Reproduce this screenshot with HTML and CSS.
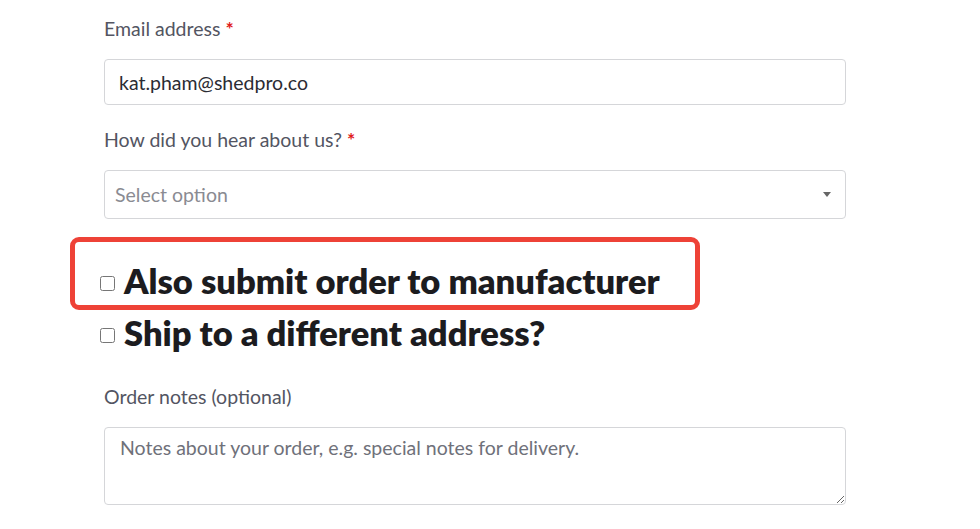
FILE: index.html
```html
<!DOCTYPE html>
<html>
<head>
<meta charset="utf-8">
<link rel="stylesheet" href="styles.css">
</head>
<body>
<form class="form">
  <div class="field">
    <label class="label">Email address <span class="req">*</span></label>
    <input class="input" type="text" value="kat.pham@shedpro.co">
  </div>
  <div class="field">
    <label class="label">How did you hear about us? <span class="req">*</span></label>
    <div class="select">
      <span class="placeholder">Select option</span>
      <span class="caret"></span>
    </div>
  </div>
  <div class="checks">
    <div class="highlight">
      <label class="check"><input type="checkbox" class="cb"><span>Also submit order to manufacturer</span></label>
    </div>
    <label class="check second"><input type="checkbox" class="cb"><span>Ship to a different address?</span></label>
  </div>
  <div class="field notes">
    <label class="label">Order notes (optional)</label>
    <textarea class="textarea" placeholder="Notes about your order, e.g. special notes for delivery."></textarea>
  </div>
</form>
</body>
</html>
```
FILE: styles.css
```css
html, body {
  margin: 0;
  padding: 0;
  background: #ffffff;
}
body {
  font-family: Lato, "Open Sans", sans-serif;
  color: #4d4f5c;
}
.form {
  width: 742px;
  margin-left: 104px;
  padding-top: 18px;
}
.field {
  display: flex;
  flex-direction: column;
}
.label {
  font-size: 19.5px;
  color: #535562;
  line-height: 22px;
  margin-bottom: 19px;
}
.req {
  color: #e01b1b;
  font-weight: 700;
}
.input {
  box-sizing: border-box;
  height: 46px;
  border: 1px solid #d5d6d9;
  border-radius: 4px;
  padding: 0 14px;
  font-family: inherit;
  font-size: 19.5px;
  color: #2b2c33;
  margin-bottom: 24px;
  outline: none;
}
.select {
  box-sizing: border-box;
  height: 49px;
  border: 1px solid #d5d6d9;
  border-radius: 4px;
  padding: 0 10px;
  display: flex;
  align-items: center;
  justify-content: space-between;
}
.placeholder {
  font-size: 19.5px;
  color: #8a8b92;
}
.caret {
  width: 0;
  height: 0;
  border-left: 4px solid transparent;
  border-right: 4px solid transparent;
  border-top: 5px solid #666;
  margin-right: 4px;
}
.checks {
  margin-left: -34px;
  margin-top: 18px;
}
.highlight {
  width: 595px;
  height: 61px;
  border: 5px solid #ee4237;
  border-radius: 9px;
  display: flex;
  align-items: flex-end;
  padding-left: 25px;
  padding-bottom: 2px;
}
.check {
  display: flex;
  align-items: center;
  font-size: 34.5px;
  font-weight: 800;
  color: #1c1c1f;
  line-height: 40px;
}
.highlight .check {
  margin-bottom: 2px;
}
.check .cb {
  width: 15px;
  height: 15px;
  margin: 4px 9px 0 0;
}
.second {
  margin-left: 30px;
  margin-top: 3px;
}
.notes {
  margin-top: 33px;
}
.notes .label {
  margin-bottom: 19px;
}
.textarea {
  box-sizing: border-box;
  height: 78px;
  border: 1px solid #d5d6d9;
  border-radius: 4px;
  padding: 8px 15px;
  font-family: inherit;
  font-size: 19.5px;
  resize: vertical;
  outline: none;
}
.textarea::placeholder {
  color: #6f717a;
}
```
